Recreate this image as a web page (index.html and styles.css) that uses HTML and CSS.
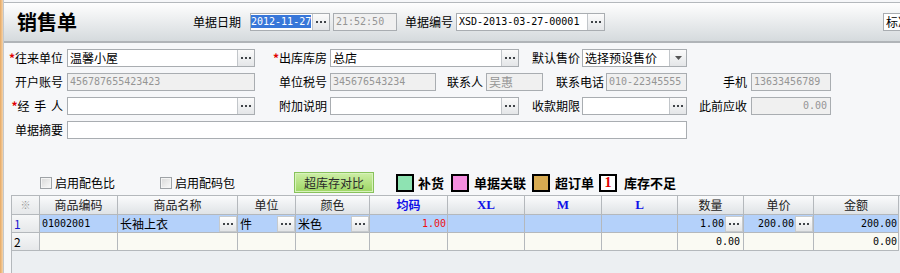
FILE: index.html
```html
<!DOCTYPE html>
<html lang="zh-CN">
<head>
<meta charset="utf-8">
<title>销售单</title>
<link rel="stylesheet" href="styles.css">
</head>
<body>
<div class="app">
  <div class="edge"></div>
  <div class="main">
    <header class="head">
      <h1 class="title">销售单</h1>
      <span class="hlabel">单据日期</span>
      <div class="field w-date"><span class="val num"><span class="sel">2012-11-27</span></span><span class="btn"><svg width="10" height="2" viewBox="0 0 10 2"><rect x="0" y="0" width="2" height="2"/><rect x="4" y="0" width="2" height="2"/><rect x="8" y="0" width="2" height="2"/></svg></span></div>
      <div class="field w-time dis"><span class="val num">21:52:50</span></div>
      <span class="hlabel l-no">单据编号</span>
      <div class="field w-no"><span class="val num">XSD-2013-03-27-00001</span><span class="btn"><svg width="10" height="2" viewBox="0 0 10 2"><rect x="0" y="0" width="2" height="2"/><rect x="4" y="0" width="2" height="2"/><rect x="8" y="0" width="2" height="2"/></svg></span></div>
      <div class="field w-std"><span class="val">标准</span></div>
    </header>

    <section class="form">
      <div class="row">
        <label class="lb lb-a"><i class="req">*</i>往来单位</label>
        <div class="field w188"><span class="val">温馨小屋</span><span class="btn"><svg width="10" height="2" viewBox="0 0 10 2"><rect x="0" y="0" width="2" height="2"/><rect x="4" y="0" width="2" height="2"/><rect x="8" y="0" width="2" height="2"/></svg></span></div>
        <label class="lb lb-b"><i class="req">*</i>出库库房</label>
        <div class="field w189"><span class="val">总店</span><span class="btn"><svg width="10" height="2" viewBox="0 0 10 2"><rect x="0" y="0" width="2" height="2"/><rect x="4" y="0" width="2" height="2"/><rect x="8" y="0" width="2" height="2"/></svg></span></div>
        <label class="lb lb-c">默认售价</label>
        <div class="field w105"><span class="val">选择预设售价</span><span class="btn"><svg width="7" height="4" viewBox="0 0 7 4"><path d="M0 0h7L3.5 4z" fill="#555"/></svg></span></div>
      </div>
      <div class="row">
        <label class="lb lb-a">开户账号</label>
        <div class="field w188 dis"><span class="val num">456787655423423</span></div>
        <label class="lb lb-b">单位税号</label>
        <div class="field w106 dis"><span class="val num">345676543234</span></div>
        <label class="lb lb-d">联系人</label>
        <div class="field w57 dis"><span class="val">吴惠</span></div>
        <label class="lb lb-e">联系电话</label>
        <div class="field w81 dis"><span class="val num">010-22345555</span></div>
        <label class="lb lb-f">手机</label>
        <div class="field w80 dis"><span class="val num">13633456789</span></div>
      </div>
      <div class="row">
        <label class="lb lb-a"><i class="req">*</i><span class="spaced">经 手 人</span></label>
        <div class="field w188"><span class="val"></span><span class="btn"><svg width="10" height="2" viewBox="0 0 10 2"><rect x="0" y="0" width="2" height="2"/><rect x="4" y="0" width="2" height="2"/><rect x="8" y="0" width="2" height="2"/></svg></span></div>
        <label class="lb lb-b">附加说明</label>
        <div class="field w189"><span class="val"></span><span class="btn"><svg width="10" height="2" viewBox="0 0 10 2"><rect x="0" y="0" width="2" height="2"/><rect x="4" y="0" width="2" height="2"/><rect x="8" y="0" width="2" height="2"/></svg></span></div>
        <label class="lb lb-c">收款期限</label>
        <div class="field w105"><span class="val"></span><span class="btn"><svg width="10" height="2" viewBox="0 0 10 2"><rect x="0" y="0" width="2" height="2"/><rect x="4" y="0" width="2" height="2"/><rect x="8" y="0" width="2" height="2"/></svg></span></div>
        <label class="lb lb-f">此前应收</label>
        <div class="field w80 dis"><span class="val num right">0.00</span></div>
      </div>
      <div class="row">
        <label class="lb lb-a">单据摘要</label>
        <div class="field w620"><span class="val"></span></div>
      </div>
    </section>

    <div class="toolbar">
      <span class="cb"></span><span class="cblabel">启用配色比</span>
      <span class="cb cb2"></span><span class="cblabel">启用配码包</span>
      <button class="gbtn">超库存对比</button>
      <span class="lg lg-green"></span><span class="lgt t1">补货</span>
      <span class="lg lg-pink"></span><span class="lgt">单据关联</span>
      <span class="lg lg-tan"></span><span class="lgt t3">超订单</span>
      <span class="lg lg-one">1</span><span class="lgt t4">库存不足</span>
    </div>

    <div class="gridwrap">
      <div class="tbl">
        <div class="c h rh star">※</div>
        <div class="c h">商品编码</div>
        <div class="c h">商品名称</div>
        <div class="c h">单位</div>
        <div class="c h">颜色</div>
        <div class="c h blue">均码</div>
        <div class="c h blue ser">XL</div>
        <div class="c h blue ser">M</div>
        <div class="c h blue ser">L</div>
        <div class="c h">数量</div>
        <div class="c h">单价</div>
        <div class="c h">金额</div>

        <div class="c rh r1 idx">1</div>
        <div class="c s"><span class="v num">01002001</span></div>
        <div class="c s"><span class="v">长袖上衣</span><span class="cbtn"><svg width="10" height="2" viewBox="0 0 10 2"><rect x="0" y="0" width="2" height="2"/><rect x="4" y="0" width="2" height="2"/><rect x="8" y="0" width="2" height="2"/></svg></span></div>
        <div class="c s"><span class="v">件</span><span class="cbtn"><svg width="10" height="2" viewBox="0 0 10 2"><rect x="0" y="0" width="2" height="2"/><rect x="4" y="0" width="2" height="2"/><rect x="8" y="0" width="2" height="2"/></svg></span></div>
        <div class="c s"><span class="v">米色</span><span class="cbtn"><svg width="10" height="2" viewBox="0 0 10 2"><rect x="0" y="0" width="2" height="2"/><rect x="4" y="0" width="2" height="2"/><rect x="8" y="0" width="2" height="2"/></svg></span></div>
        <div class="c s"><span class="v num right red">1.00</span></div>
        <div class="c s"></div>
        <div class="c s"></div>
        <div class="c s"></div>
        <div class="c s"><span class="v num right">1.00</span><span class="cbtn"><svg width="10" height="2" viewBox="0 0 10 2"><rect x="0" y="0" width="2" height="2"/><rect x="4" y="0" width="2" height="2"/><rect x="8" y="0" width="2" height="2"/></svg></span></div>
        <div class="c s"><span class="v num right">200.00</span><span class="cbtn"><svg width="10" height="2" viewBox="0 0 10 2"><rect x="0" y="0" width="2" height="2"/><rect x="4" y="0" width="2" height="2"/><rect x="8" y="0" width="2" height="2"/></svg></span></div>
        <div class="c s"><span class="v num right">200.00</span></div>

        <div class="c rh">2</div>
        <div class="c e"></div>
        <div class="c e"></div>
        <div class="c e"></div>
        <div class="c e"></div>
        <div class="c e"></div>
        <div class="c e"></div>
        <div class="c e"></div>
        <div class="c e"></div>
        <div class="c e"><span class="v num right pr">0.00</span></div>
        <div class="c e"></div>
        <div class="c e"><span class="v num right">0.00</span></div>
      </div>
    </div>
  </div>
</div>
</body>
</html>
```

FILE: styles.css
```css
* { box-sizing: border-box; margin: 0; padding: 0; }
html, body { width: 900px; height: 273px; overflow: hidden; }
body {
  font: 12px/16px "Noto Sans CJK SC", "Noto Sans", sans-serif;
  color: #000;
  background: #f2f3f5;
}
.app { display: flex; height: 273px; }
.edge { width: 3px; flex-shrink: 0; background: linear-gradient(to right, #e6a862, #f5d4ac); }
.main {
  flex: 1; min-width: 0;
  border-left: 1px solid #c4c8cc;
  background: #f6f7f9;
  display: flex; flex-direction: column;
}

/* header */
.head {
  margin-top: 2px;
  height: 41px;
  flex-shrink: 0;
  border-top: 1px solid #b4b8bc;
  border-bottom: 2px solid #b0b4b8;
  background: linear-gradient(#fefefe, #d5dadd);
  display: flex; align-items: center;
  padding-left: 13px;
  overflow: hidden;
}
.title {
  font-size: 20px; line-height: 22px; font-weight: 700;
  width: 176px; flex-shrink: 0;
  color: #000;
}
.hlabel { flex-shrink: 0; width: 48px; margin-right: 9px; white-space: nowrap; }
.l-no { margin-left: 8px; margin-right: 3px; }

.field {
  display: flex; align-items: center; flex-shrink: 0;
  height: 18px;
  border: 1px solid #a9adb1;
  background: #fff;
  overflow: hidden;
}
.field .val {
  flex: 1; min-width: 0;
  padding-left: 2px;
  white-space: nowrap; overflow: hidden;
  line-height: 16px;
}
.field .btn {
  width: 17px; height: 16px; flex-shrink: 0;
  border-left: 1px solid #c2c6ca;
  background: linear-gradient(#fbfbfb, #e4e6e8);
  display: flex; align-items: center; justify-content: center;
}
.btn svg, .cbtn svg { fill: #404448; display: block; }
.field.dis { background: #f0f0f0; color: #959595; }
.num { font-family: "DejaVu Sans Mono", "Liberation Mono", monospace; font-size: 10px; letter-spacing: 0; }
.right { text-align: right; padding-right: 3px; }
.sel { background: #3877d9; color: #fff; padding: 1px 0; }

.w-date { width: 80px; }
.w-date .val { padding-left: 0; }
.w-time { width: 64px; margin-left: 3px; }
.w-no { width: 149px; }
.w-std { width: 40px; margin-left: 278px; }

/* form */
.form { padding-top: 6px; flex-shrink: 0; }
.row { display: flex; height: 18px; margin-bottom: 6px; align-items: center; }
.lb { flex-shrink: 0; text-align: right; line-height: 18px; white-space: nowrap; padding-right: 1px; }
.req { font-style: normal; color: #e00000; font-weight: 700; }
.spaced { word-spacing: 2px; }
.lb-a { width: 60px; margin-right: 3px; }
.lb-b { width: 73px; margin-right: 2px; }
.lb-c { width: 62px; margin-right: 1px; }
.lb-d { width: 48px; margin-right: 2px; }
.lb-e { width: 62px; margin-right: 1px; }
.lb-f { width: 62px; margin-right: 2px; padding-right: 2px; }
.w188 { width: 188px; }
.w189 { width: 189px; }
.w105 { width: 105px; }
.w106 { width: 106px; }
.w57 { width: 57px; }
.w81 { width: 81px; }
.w80 { width: 80px; }
.w620 { width: 620px; }

/* toolbar */
.toolbar {
  display: flex; align-items: center;
  height: 21px; margin-top: 27px;
  padding-left: 36px;
  flex-shrink: 0;
}
.cb {
  width: 12px; height: 12px; flex-shrink: 0;
  border: 1px solid #9ea2a6;
  background: linear-gradient(135deg, #d8d8d8, #fafafa);
  box-shadow: inset 0 0 0 1px #f4f4f4;
}
.cb2 { margin-left: 45px; }
.cblabel { margin-left: 3px; width: 60px; white-space: nowrap; }
.gbtn {
  margin-left: 59px;
  width: 80px; height: 21px; flex-shrink: 0;
  border: 1px solid #88c25c;
  background: linear-gradient(#cdeea6, #9dd663);
  box-shadow: inset 0 0 0 1px #d8f2bc;
  font: 12px/19px "Noto Sans CJK SC", sans-serif;
  color: #2a2a2a;
  cursor: default;
}
.lg {
  width: 18px; height: 18px; flex-shrink: 0;
  border: 2px solid #000;
  margin-left: 7px;
}
.lg-green { background: #8ee3b2; margin-left: 22px; }
.lg-pink { background: #f58ee0; }
.lg-tan { background: #d8ab52; margin-left: 6px; }
.lg-one {
  background: #fff; margin-left: 5px;
  color: #e00000; font: 700 14px/14px "Liberation Serif", serif;
  text-align: center;
}
.lgt { margin-left: 5px; font-size: 13px; font-weight: 700; white-space: nowrap; }
.lgt.t1 { margin-left: 4px; }
.lgt.t4 { margin-left: 7px; }

/* grid */
.gridwrap {
  flex: 1;
  margin-top: 2px;
  margin-left: 7px;
  border-left: 1px solid #b4b8bc;
  background: #eceff2;
}
.tbl {
  display: grid;
  grid-template-columns: 28px 78px 120px 58px 74px 78px 77px 77px 76px 66px 70px 85px;
  grid-template-rows: 19px 18px 18px;
  border-top: 1px solid #b4b8bc;
}
.c {
  border-right: 1px solid #b4b8bc;
  border-bottom: 1px solid #b4b8bc;
  display: flex; align-items: center;
  overflow: hidden; white-space: nowrap;
}
.h {
  justify-content: center;
  background: linear-gradient(#fafbfc, #dfe3e6);
  color: #222;
}
.blue { color: #1010e8; font-weight: 700; }
.ser { font-family: "Liberation Serif", serif; font-size: 13px; }
.star { color: #999; font-size: 10px; }
.rh { background: linear-gradient(#f6f7f8, #e6e8ea); padding-left: 2px; }
.h.rh { justify-content: center; padding-left: 0; }
.idx { color: #1a1ad0; }
.s { background: #b4d1fa; }
.e { background: #fafaf3; }
.v { flex: 1; min-width: 0; padding-left: 2px; line-height: 16px; overflow: hidden; }
.v.right { padding-right: 1px; }
.v.pr { padding-right: 3px; }
.red { color: #f01010; }
.cbtn {
  width: 18px; height: 16px; flex-shrink: 0;
  border: 1px solid #c6cacd;
  background: linear-gradient(#ffffff, #e2e4e6);
  display: flex; align-items: center; justify-content: center;
}
```
